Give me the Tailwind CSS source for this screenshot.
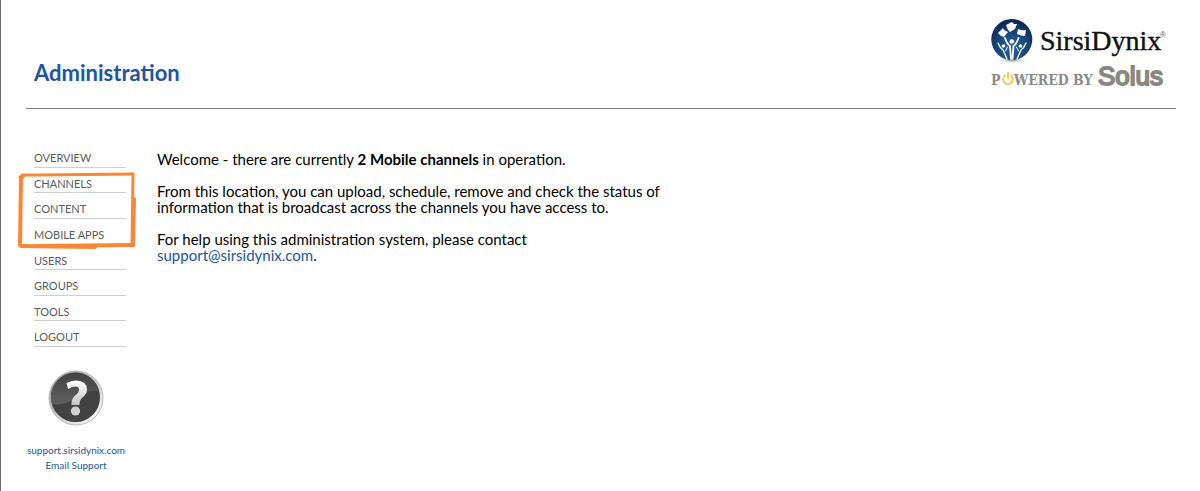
<!DOCTYPE html>
<html lang="en">
<head>
    <meta charset="UTF-8">
    <meta name="viewport" content="width=device-width, initial-scale=1.0">
    <title>Administration</title>
    <script src="https://cdn.jsdelivr.net/npm/@tailwindcss/browser@4"></script>
</head>
<body class="min-h-screen border-l border-[#6b6b6b] bg-white font-['Lato',sans-serif] text-black">
    <!-- Header -->
    <header class="ml-[25px] mr-6 flex h-[109px] items-start justify-between border-b border-[#808080] pl-2">
        <h1 class="pt-[59px] text-[22px] leading-7 font-bold text-[#2155a0]">Administration</h1>
        <svg class="mt-4 mr-2 h-[74px] w-[180px]" viewBox="988 16 180 74" role="img" aria-label="SirsiDynix, powered by Solus">
            <defs>
                <radialGradient id="globe" cx="50%" cy="70%" r="65%">
                    <stop offset="0" stop-color="#2b6499"/>
                    <stop offset="0.6" stop-color="#174579"/>
                    <stop offset="1" stop-color="#0c2850"/>
                </radialGradient>
                <radialGradient id="shadow">
                    <stop offset="0" stop-color="#555" stop-opacity="0.7"/>
                    <stop offset="1" stop-color="#fff" stop-opacity="0"/>
                </radialGradient>
            </defs>
            <ellipse cx="1012" cy="60" rx="17" ry="4" fill="url(#shadow)"/>
            <circle cx="1011.8" cy="39.5" r="20.5" fill="url(#globe)"/>
            <!-- Books -->
            <g fill="#fff">
                <path d="M998 33l5-5 1 2 4 2-4 5-3-1z"/>
                <path d="M1006 25l6-3 2 2 3 0-2 5-5 3-2-2z"/>
                <path d="M1018 29q4 2 8 1l-1 6q-4 0-8-2z"/>
            </g>
            <!-- Readers -->
            <g fill="none" stroke="#fff" stroke-linecap="round">
                <path d="M1005 38q2 6 5 8l1 13M1018.500 38q-2 6-5 8l-1 13" stroke-width="1.800"/>
                <path d="M998 43q2 5 5 7l4 9M1026 43q-2 5-5 7l-4 9" stroke-width="1.300"/>
                <path d="M1007.500 47l-2 4M1016.500 47l2 4" stroke-width="1"/>
            </g>
            <g fill="#fff">
                <circle cx="1011.800" cy="41.500" r="2.300"/>
                <circle cx="1003.500" cy="46" r="1.800"/>
                <circle cx="1020.500" cy="46" r="1.800"/>
            </g>
            <text x="1040" y="50" font-family="Liberation Serif, serif" font-size="28" fill="#111" stroke="#111" stroke-width="0.4">SirsiDynix</text>
            <text x="1160" y="37" font-family="Liberation Sans, sans-serif" font-size="8" fill="#555">®</text>
            <g font-family="DejaVu Serif Condensed, DejaVu Serif, serif" font-size="14" font-weight="bold" fill="#8a8a8a">
                <text x="991" y="85">P</text>
                <text x="1014" y="85">WERED BY</text>
            </g>
            <path d="M1005 75.500a4.800 4.800 0 1 0 6 0M1008 73v5" fill="none" stroke="#fac858" stroke-width="2" stroke-linecap="round"/>
            <text x="1098" y="85" font-family="Liberation Sans, sans-serif" font-size="26" fill="#898880" stroke="#898880" stroke-width="1.800">Solus</text>
        </svg>
    </header>

    <div class="flex pt-[33px]">
        <!-- Sidebar -->
        <aside class="w-[150px] shrink-0 text-center">
            <nav class="relative mr-[25px] ml-[33px] text-left text-[11px] text-[#5c5c5c]">
                <ul class="flex h-[205px] flex-col">
                    <li class="flex-1 border-b border-[#cfcfcf] pt-2 leading-4"><a href="#">OVERVIEW</a></li>
                    <li class="flex-1 border-b border-[#cfcfcf] pt-2 leading-4"><a href="#">CHANNELS</a></li>
                    <li class="flex-1 border-b border-[#cfcfcf] pt-2 leading-4"><a href="#">CONTENT</a></li>
                    <li class="flex-1 border-b border-[#cfcfcf] pt-2 leading-4"><a href="#">MOBILE APPS</a></li>
                    <li class="flex-1 border-b border-[#cfcfcf] pt-2 leading-4"><a href="#">USERS</a></li>
                    <li class="flex-1 border-b border-[#cfcfcf] pt-2 leading-4"><a href="#">GROUPS</a></li>
                    <li class="flex-1 border-b border-[#cfcfcf] pt-2 leading-4"><a href="#">TOOLS</a></li>
                    <li class="flex-1 border-b border-[#cfcfcf] pt-2 leading-4"><a href="#">LOGOUT</a></li>
                </ul>
                <!-- Hand drawn marker around the channel links -->
                <svg class="pointer-events-none absolute top-[30px] -left-4 h-20 w-[120px]" viewBox="0 0 120 80" fill="none" stroke="#fb8734" stroke-linecap="round" aria-hidden="true">
                    <path d="M4 3L20 3L115 2" stroke-width="3"/>
                    <path d="M115 2L114 73" stroke-width="3"/>
                    <path d="M116 27L115 73" stroke-width="4"/>
                    <path d="M3 5L2 73" stroke-width="4"/>
                    <path d="M3 74L77 75" stroke-width="4"/>
                    <path d="M20 74L115 73" stroke-width="4"/>
                    <path d="M1 5L4 3M2 9L7 4" stroke-width="1.500"/>
                </svg>
            </nav>

            <svg class="mx-auto mt-5 h-[62px] w-[62px]" viewBox="0 0 62 62" role="img" aria-label="Help">
                <defs>
                    <linearGradient id="ring" x1="0" y1="0" x2="1" y2="1">
                        <stop offset="0" stop-color="#909090"/>
                        <stop offset="0.5" stop-color="#c8c8c8"/>
                        <stop offset="0.85" stop-color="#f4f4f4"/>
                        <stop offset="1" stop-color="#aaa"/>
                    </linearGradient>
                    <linearGradient id="gloss" x1="0" y1="0" x2="0" y2="1">
                        <stop offset="0" stop-color="#424242"/>
                        <stop offset="1" stop-color="#606060"/>
                    </linearGradient>
                    <linearGradient id="mark" x1="0" y1="0" x2="0" y2="1">
                        <stop offset="0" stop-color="#fff"/>
                        <stop offset="1" stop-color="#c4c4c4"/>
                    </linearGradient>
                </defs>
                <circle cx="31" cy="31" r="27" fill="url(#ring)" stroke="#bbb"/>
                <circle cx="30.500" cy="30.500" r="24.500" fill="#424242"/>
                <path d="M7 37A24.500 24.500 0 0 1 54 23Q42 24 32 30Q20 39 7 37z" fill="url(#gloss)"/>
                <path d="M21.500 16Q26 13.500 31 13.500Q42 14 42 22.500Q42 27 37 31Q34.500 33 34.500 38H26.500Q26 32 30 28.500Q34 26 34 22.500Q34 19.500 30.500 19.500Q27 19.500 23 22z" fill="url(#mark)"/>
                <circle cx="30.500" cy="44" r="4.600" fill="#d0d0d0"/>
            </svg>
            <p class="mt-[14px] text-[10px] leading-[15px] text-[#2155a0]">
                <a href="#" class="block">support.sirsidynix.com</a>
                <a href="#" class="block">Email Support</a>
            </p>
        </aside>

        <!-- Content -->
        <main class="mt-[9px] ml-[6px] max-w-[520px] space-y-4 text-[15px] leading-4">
            <p>Welcome - there are currently <b>2 Mobile channels</b> in operation.</p>
            <p>From this location, you can upload, schedule, remove and check the status of information that is broadcast across the channels you have access to.</p>
            <p>For help using this administration system, please contact<br><a href="mailto:support@sirsidynix.com" class="text-[#2155a0]">support@sirsidynix.com</a>.</p>
        </main>
    </div>
</body>
</html>
